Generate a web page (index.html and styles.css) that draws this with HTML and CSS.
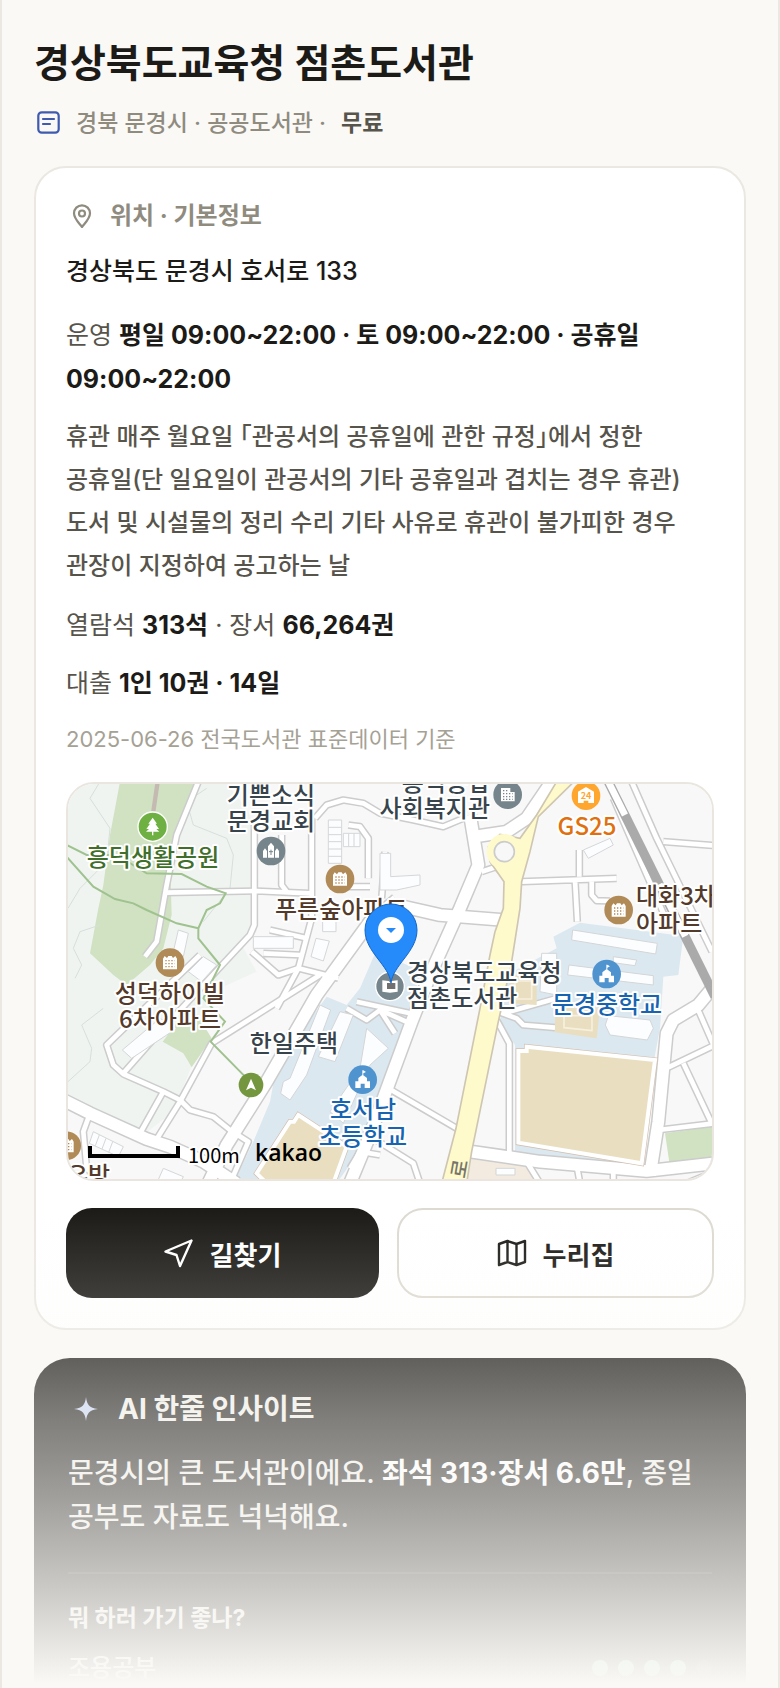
FILE: index.html
```html
<!DOCTYPE html>
<html lang="ko">
<head>
  <meta charset="UTF-8" />
  <meta name="viewport" content="width=device-width, initial-scale=1.0"/>
  <title>경상북도교육청 점촌도서관</title>
  <link rel="stylesheet" href="styles.css">
</head>
<body>

<main class="page">
  <header class="page-header">
    <h1>경상북도교육청 점촌도서관</h1>
    <p class="meta">
      <svg class="icon-book" viewBox="0 0 24 24" aria-hidden="true">
        <rect x="1.3" y="1.3" width="20.4" height="20.4" rx="3.4"/>
        <path d="M6 8h11M6 13h7"/>
      </svg>
      <span>경북 문경시 · 공공도서관 ·</span>
      <strong>무료</strong>
    </p>
  </header>

  <!-- Location + basic info -->
  <section class="card">
    <h2 class="card-title">
      <svg class="icon-pin" viewBox="0 0 24 24" aria-hidden="true">
        <path d="M12 23C8.500 18.500 4 14.500 4 9.300a8 8 0 0 1 16 0C20 14.500 15.500 18.500 12 23z"/>
        <circle cx="12" cy="9.500" r="3"/>
      </svg>
      위치 · 기본정보
    </h2>
    <p class="address">경상북도 문경시 호서로 133</p>
    <p class="row">운영 <b>평일 09:00~22:00 · 토 09:00~22:00 · 공휴일 09:00~22:00</b></p>
    <p class="closed">휴관 매주 월요일 「관공서의 공휴일에 관한 규정」에서 정한 공휴일(단 일요일이 관공서의 기타 공휴일과 겹치는 경우 휴관) 도서 및 시설물의 정리 수리 기타 사유로 휴관이 불가피한 경우 관장이 지정하여 공고하는 날</p>
    <p class="row">열람석 <b>313석</b> · 장서 <b>66,264권</b></p>
    <p class="row">대출 <b>1인 10권 · 14일</b></p>
    <p class="source">2025-06-26 전국도서관 표준데이터 기준</p>

    <div class="map">
      <svg viewBox="8 9 644 395" preserveAspectRatio="xMidYMid slice" role="img" aria-label="지도">
        <defs>
          <g id="roads-wide">
            <path d="M1010 375L930 440L770 660L620 920L500 1110L445 1225"/>
            <path d="M1230 120L1255 270L1200 400L1110 600L1055 740L985 930L930 1080L870 1225"/>
            <path d="M10 975L90 1015L260 1092L330 1115L430 1160L530 1225"/>
            <path d="M1965 630L1915 690L1840 735L1820 775L1795 1040L1770 1200"/>
            <path d="M1235 1130L1440 1160L1760 1188L1965 1165"/>
            <path d="M1030 395L1140 420L1330 435"/>
            <path d="M1475 20L1400 130L1340 170L1240 185"/>
          </g>
          <g id="roads-thin">
            <path d="M415 20L350 180L320 330L290 500L255 545"/>
            <path d="M315 353L590 348L750 355"/>
            <path d="M583 150V450L570 480L300 770L190 895"/>
            <path d="M755 130V430L715 580L650 700"/>
            <path d="M665 180V330L680 350"/>
            <path d="M765 130L800 90L850 75L910 85L960 115L1060 135L1150 155L1210 130"/>
            <path d="M575 530L655 600L715 580L835 610M610 535L720 540M630 465L740 490"/>
            <path d="M420 540L140 810L160 870L190 897L310 950L360 975L390 1005L460 1025L510 1065L565 1100L510 1225"/>
            <path d="M780 600L455 805L360 980L285 1100"/>
            <path d="M310 950L240 1075M88 1020L70 1070L80 1180L130 1225"/>
            <path d="M865 150L900 155L925 190V310M815 300L840 335H930M975 230L965 370"/>
            <path d="M1385 320L1670 310M1558 225V305M1545 315L1552 440M1595 320V360L1610 377L1650 378"/>
            <path d="M1265 290L1310 275L1340 310M1250 195L1255 250"/>
            <path d="M1715 20L1790 190L1956 530M1660 70L1830 460M1810 200L1965 212"/>
            <path d="M1908 690L1965 820M1825 877L1965 810M1870 865L1955 1045M1795 1065L1965 1045"/>
            <path d="M1348 1132V805L1310 735M985 940L1190 1060M1400 1160L1440 1225M1550 1170L1560 1225M1660 1180V1225M1880 1225L1965 1190"/>
            <path d="M1320 712L1370 730L1390 750L1485 758M1330 715L1490 670"/>
            <path d="M860 700L920 735L960 705L1050 745M890 680L1050 715M960 705L1005 775"/>
            <path d="M940 1090L1060 1165L1080 1225M870 1180L900 1130L960 1140"/>
          </g>
          <g id="apt">
            <circle r="43" fill="#b08a57"/>
            <path fill="#fff" d="M-21 20V-12L-16-20L-9-14L-5-20H5L9-14L16-20L21-12V20z"/>
            <path class="windows" d="M-14-6H14M-14 3H14M-14 12H14"/>
          </g>
          <g id="school">
            <circle r="43" fill="#4f93cf"/>
            <path fill="#fff" d="M-22 25V5H-13V-5L0-15L13-5V5H22V25H6V12H-6V25zM-1-12V-28H2L10-23L2-19V-12z"/>
          </g>
        </defs>

        <g transform="scale(.33333)">
          <rect width="1980" height="1240" fill="#f8f8f8"/>
          <path fill="#eff4f1" d="M0 0H480L560 100L590 170V470L540 500L590 590L480 640L400 860L340 1010L250 1080L0 960z"/>
          <path fill="#d0e2c2" d="M180 20H405L330 250L335 420L310 520L270 570L200 630L160 600L90 535L115 400L130 330L150 180zM345 750L400 700L455 790L395 877L370 835L308 800z"/>
          <path class="contour" d="M120 20L90 70L150 160L140 260L60 340L24 400M440 40L380 80L400 150L500 190L520 240L510 340L430 440M120 450L60 470L40 520L65 570L45 610M24 920L90 860L95 820L65 750L130 700"/>
          <path fill="none" stroke="#c5bab2" stroke-width="13" d="M293 20L280 110"/>
          <path fill="#dbe8f0" d="M800 665L860 690L900 640L960 500L1020 560L1085 590L960 960L890 1140L830 1225H520L580 1100L630 980L650 870z"/>
          <path fill="#dbe8f0" d="M1480 485L1560 443L1870 483L1855 600L1810 605L1800 760L1785 840L1745 1175L1365 1135V810L1320 740L1340 600L1490 520z"/>
          <path fill="#d0e2c2" d="M1815 1075L1965 1053V1158L1830 1175z"/>
          <path fill="#f3ebe0" d="M1235 1150L1410 1172L1420 1225H1220z"/>

          <g class="casing wide"><use href="#roads-wide"/></g>
          <g class="casing thin"><use href="#roads-thin"/></g>
          <g class="surface wide"><use href="#roads-wide"/></g>
          <g class="surface thin"><use href="#roads-thin"/></g>

          <!-- buildings -->
          <g class="building">
            <path d="M805 135h40v130h-40zM805 157h40M805 179h40M805 200h40M805 222h40M805 244h40M850 175h50v40h-50zM866 175v40M882 175v40M788 430h40v40h-40z"/>
            <path d="M355 465L385 475L370 545L340 530zM580 485H700V520H580zM768 490L808 498L790 558L753 545zM430 545L470 570L425 620L385 590zM960 235H992V305L1080 300V330L1010 345H960z"/>
            <path d="M300 730L350 760L215 850L187 825zM780 690L812 705L740 900L690 975L662 955L670 920L690 910zM840 710L880 720L825 860L775 845zM920 760L985 820L930 870L850 1045L810 1010L900 880z"/>
            <path d="M1570 225L1650 190L1660 210L1585 250zM1538 465L1792 505L1787 537L1535 495zM1527 570L1780 602V630L1523 600zM1660 545L1730 555L1725 572L1660 563zM1445 535H1490V660L1440 650z"/>
            <path d="M1645 722L1770 735L1780 760L1762 795L1650 780L1636 750zM1308 1180H1365V1200H1308z"/>
            <path d="M100 1070L190 1115L175 1145L88 1105zM118 1080L106 1112M138 1090L126 1122M158 1100L146 1132M310 1180L370 1205L360 1225H290z"/>
          </g>

          <!-- sports fields -->
          <g fill="#e9dec0">
            <path class="field-line" d="M1375 828H1400V815L1785 855L1745 1165L1375 1103z"/>
            <path class="field" d="M1375 828H1400V815L1785 855L1745 1165L1375 1103z"/>
            <path class="field-line" d="M715 1020L860 1115L820 1225H620L590 1195L690 1040H702z"/>
            <path class="field" d="M715 1020L860 1115L820 1225H620L590 1195L690 1040H702z"/>
            <path d="M1485 700H1620L1610 790L1485 772zM1350 600H1430V690L1345 685z"/>
            <path fill="none" stroke="#f6f0df" stroke-width="5" d="M1512 722H1596V767L1512 758zM1365 618H1415V672H1365z"/>
          </g>

          <!-- main road and roundabout -->
          <path fill="#fefacb" stroke="#cfc6b2" stroke-width="5" d="M1490 20H1542L1435 125L1410 230L1385 320L1380 400L1355 560L1315 740L1235 1130L1220 1225H1145L1188 1060L1260 700L1290 540L1305 470L1330 400L1332 320L1290 260L1285 215L1320 178L1380 190L1430 120z"/>
          <circle cx="1333" cy="230" r="53" fill="#fefacb"/>
          <circle cx="1333" cy="230" r="30" fill="#f8f8f8" stroke="#ccc" stroke-width="5"/>

          <!-- railway -->
          <path fill="none" stroke="#aaa" stroke-width="28" d="M1640 10L1965 665"/>
          <path fill="none" stroke="#fff" stroke-width="20" d="M1645 20L1695 120M1798 328L1876 484"/>

          <!-- walking trails -->
          <path class="trail" d="M20 210L80 240H170L260 295L365 297L440 335L497 355L480 385L440 405L415 460V490L480 570L430 670L495 740L452 800L570 920M20 245L100 335L165 372L220 385L260 405L350 445L415 460"/>

          <!-- place markers -->
          <g stroke="none">
            <g transform="translate(278 155)">
              <circle class="ring" r="44" fill="#6fb043"/>
              <path fill="#fff" d="M0-27L13-9H8L19 7H11L20 15H2V26H-2V15H-20L-11 7H-19L-8-9H-13z"/>
            </g>
            <g transform="translate(633 228)">
              <circle r="43" fill="#76858c"/>
              <path fill="#fff" d="M-24 20V0L-18-8L-12 0V20zM24 20V0L18-8L12 0V20zM-9 20V-14L0-25L9-14V20z"/>
              <path stroke="#76858c" stroke-width="3" d="M0-4V12M-6 2H6"/>
            </g>
            <use href="#apt" x="840" y="312"/>
            <use href="#apt" x="330" y="563"/>
            <use href="#apt" x="1676" y="405"/>
            <use href="#apt" x="20" y="1112"/>
            <use href="#school" x="1640" y="597"/>
            <use href="#school" x="908" y="914"/>
            <g transform="translate(1343 59)">
              <circle r="43" fill="#76858c"/>
              <path fill="#fff" d="M-20 20V-20H8V-8H21V20z"/>
              <path class="windows gray" d="M-14-12H4M-14-3H15M-14 6H15M-14 14H15"/>
            </g>
            <g transform="translate(1578 62)">
              <circle r="43" fill="#ffa62f"/>
              <path fill="#fff" d="M-24 22V-12L0-26L24-12V22H7V15H-7V22z"/>
            </g>
            <g transform="translate(990 634)">
              <circle class="ring" r="43" fill="#76858c"/>
              <path fill="#fff" d="M-23-18L-4-16L0-12L4-16L23-18V16L0 19L-23 16z"/>
              <path fill="#333" opacity=".7" d="M-9-10H16V8H-9z"/>
            </g>
            <g transform="translate(573 930)">
              <circle r="37" fill="#73963f"/>
              <path fill="#fff" d="M0-19L15 16L0 8L-15 16z"/>
            </g>
          </g>
        </g>

        <g class="labels">
          <text class="green" x="93" y="91" text-anchor="middle">흥덕생활공원</text>
          <text x="211" y="29" text-anchor="middle">기쁜소식</text>
          <text x="211" y="55" text-anchor="middle">문경교회</text>
          <text class="brown" x="215" y="143">푸른숲아파트</text>
          <text x="430" y="16" text-anchor="end">흥덕종합</text>
          <text x="430" y="42" text-anchor="end">사회복지관</text>
          <text class="orange" x="527" y="60" text-anchor="middle">GS25</text>
          <text class="brown" x="576" y="130">대화3차</text>
          <text class="brown" x="576" y="157">아파트</text>
          <text x="347" y="206">경상북도교육청</text>
          <text x="347" y="232">점촌도서관</text>
          <text class="blue" x="547" y="238" text-anchor="middle">문경중학교</text>
          <text class="brown" x="110" y="227" text-anchor="middle">성덕하이빌</text>
          <text class="brown" x="110" y="253" text-anchor="middle">6차아파트</text>
          <text x="234" y="277" text-anchor="middle">한일주택</text>
          <text class="blue" x="303" y="343" text-anchor="middle">호서남</text>
          <text class="blue" x="303" y="370" text-anchor="middle">초등학교</text>
          <text class="brown" x="6" y="409">우방</text>
          <text class="road" transform="translate(405 404) rotate(-80)">로</text>
          <text class="store" x="526" y="24" text-anchor="middle">24</text>
          <text class="scale" x="128" y="388">100m</text>
          <text class="brand" x="195" y="386">kakao</text>
        </g>
        <path fill="none" stroke="#000" stroke-width="4" d="M30 371V381H118V371"/>

        <!-- selected library -->
        <path fill="#258bfb" stroke="#1566c9" d="M331 208C329 190 305 177 305 155A26 26 0 0 1 357 155C357 177 333 190 331 208z"/>
        <circle cx="331" cy="155" r="13" fill="#fff"/>
        <path fill="#258bfb" d="M326 153H336L331 158z"/>
      </svg>
    </div>

    <div class="actions">
      <button type="button" class="btn btn-dark">
        <svg viewBox="0 0 30 30" aria-hidden="true"><path d="M27.500 2.500L1.500 13.500L12.500 17L16 28z"/></svg>
        길찾기
      </button>
      <button type="button" class="btn btn-light">
        <svg viewBox="0 0 30 30" aria-hidden="true"><path d="M2 6L10.500 3L19.500 6L28 3V24L19.500 27L10.500 24L2 27zM10.500 3V24M19.500 6V27"/></svg>
        누리집
      </button>
    </div>
  </section>

  <!-- AI insight -->
  <section class="insight">
    <h2 class="insight-title">
      <svg viewBox="0 0 24 24" aria-hidden="true"><path d="M12 0C13 7.500 15 11 24 12C15 13 13 16.500 12 24C11 16.500 9 13 0 12C9 11 11 7.500 12 0z"/></svg>
      AI 한줄 인사이트
    </h2>
    <p class="insight-text">문경시의 큰 도서관이에요. <b>좌석 313·장서 6.6만</b>, 종일 공부도 자료도 넉넉해요.</p>
    <h3>뭐 하러 가기 좋나?</h3>
    <div class="score">
      <span>조용공부</span>
      <span class="dots"><i></i><i></i><i></i><i></i><i class="off"></i></span>
    </div>
  </section>

  <div class="fade"></div>
</main>

</body>
</html>
```
FILE: styles.css
```css
/* Base styles */
* {
  box-sizing: border-box;
}

body {
  margin: 0;
  font-family: Inter, 'Noto Sans CJK KR', sans-serif;
  font-weight: 500;
  background: #faf9f6;
  color: #1c1b18;
  word-break: keep-all;
}

h1, h2, h3, p {
  margin: 0;
}

b, strong {
  font-weight: 700;
}

.page {
  position: relative;
  height: 100vh;
  overflow: hidden;
  padding: 37px 32px 0;
  border: solid #eae8e1;
  border-width: 0 2px;
}

/* Header */
h1 {
  font-size: 39px;
  line-height: 52px;
  font-weight: 700;
}

.meta {
  display: flex;
  align-items: center;
  gap: 15px;
  margin: 16px 0 25px;
  padding-left: 3px;
  font-size: 23px;
  line-height: 36px;
  color: #8f8b7f;
}

.meta strong {
  color: #57544c;
}

svg {
  display: block;
}

.icon-book,
.icon-pin {
  width: 24px;
  height: 24px;
  fill: none;
  stroke: #3f5bb0;
  stroke-width: 2.2px;
  stroke-linecap: round;
}

.icon-pin {
  stroke: #8f8b7f;
}

/* Info card */
.card {
  padding: 28px 30px 30px;
  background: #fff;
  border: 2px solid #eae8e1;
  border-radius: 32px;
}

.card-title {
  display: flex;
  align-items: center;
  gap: 16px;
  padding-left: 4px;
  font-size: 24px;
  line-height: 40px;
  color: #8f8b7f;
}

.address {
  margin: 15px 0 22px;
  font-size: 25px;
  line-height: 40px;
}

.row {
  margin-bottom: 14px;
  font-size: 25px;
  line-height: 44px;
  font-weight: 400;
  color: #57544c;
}

.row b {
  color: #1c1b18;
}

.closed {
  margin-bottom: 16px;
  font-size: 24px;
  line-height: 43px;
  font-feature-settings: "halt";
  color: #57544c;
}

.source {
  margin: 16px 0 25px;
  font-size: 22px;
  line-height: 36px;
  font-weight: 400;
  color: #a5a195;
}

/* Map */
.map {
  overflow: hidden;
  border: 2px solid #eae6df;
  border-radius: 28px;
}

.map svg {
  width: 100%;
  height: 395px;
}

.wide,
.thin {
  fill: none;
  stroke: #ccc;
  stroke-linejoin: round;
}

.casing.wide {
  stroke-width: 44px;
}

.casing.thin {
  stroke-width: 23px;
}

.surface {
  stroke: #fff;
}

.surface.wide {
  stroke-width: 35px;
}

.surface.thin {
  stroke-width: 14px;
}

.contour {
  fill: none;
  stroke: #d7dfda;
  stroke-width: 3px;
}

.building {
  fill: #fcfdfe;
  stroke: #d4d6d8;
  stroke-width: 3px;
}

.field-line {
  stroke: #d3bfae;
  stroke-width: 16px;
}

.field {
  stroke: #fff;
  stroke-width: 12px;
}

.trail {
  fill: none;
  stroke: #9fc28f;
  stroke-width: 6px;
}

.windows {
  fill: none;
  stroke: #b08a57;
  stroke-width: 4px;
  stroke-dasharray: 4 5;
}

.windows.gray {
  stroke: #76858c;
}

.ring {
  stroke: #fff;
  stroke-width: 4px;
}

.labels text {
  font-size: 24px;
  font-family: 'Noto Sans CJK KR', sans-serif;
  font-weight: 500;
  fill: #37444c;
  stroke: #fff;
  stroke-width: 4px;
  stroke-linejoin: round;
  paint-order: stroke;
}

.labels .green {
  fill: #3f6f2a;
}

.labels .brown {
  fill: #543a2a;
}

.labels .orange {
  fill: #e0700f;
}

.labels .blue {
  fill: #1764b0;
}

.labels .road {
  font-size: 20px;
  fill: #77756a;
  stroke: none;
}

.labels .store {
  font-size: 9px;
  font-weight: 700;
  fill: #ffa62f;
  stroke: none;
}

.labels .scale {
  font-size: 20px;
  font-weight: 400;
  fill: #000;
}

.labels .brand {
  font-family: 'Open Sans', sans-serif;
  font-size: 23px;
  font-weight: 600;
  fill: #000;
  stroke: none;
}

/* Buttons */
.actions {
  display: flex;
  gap: 18px;
  margin-top: 27px;
}

.btn {
  display: flex;
  flex: 1;
  align-items: center;
  justify-content: center;
  gap: 16px;
  height: 90px;
  border: none;
  border-radius: 26px;
  font-family: inherit;
  font-size: 26px;
  font-weight: 700;
  cursor: pointer;
}

.btn svg {
  width: 30px;
  height: 30px;
  fill: none;
  stroke: currentColor;
  stroke-width: 2.4px;
  stroke-linejoin: round;
}

.btn-dark {
  background: #1c1b18;
  color: #fff;
}

.btn-light {
  background: #fff;
  border: 2px solid #dddad1;
  color: #1c1b18;
}

/* AI insight */
.insight {
  height: 400px;
  margin-top: 28px;
  padding: 29px 34px;
  background: #1c1b18;
  border-radius: 36px;
  color: #f0eee8;
}

.insight-title {
  display: flex;
  align-items: center;
  gap: 20px;
  padding-left: 6px;
  font-size: 28px;
  line-height: 44px;
}

.insight-title svg {
  width: 24px;
  height: 24px;
  fill: #c6d3f2;
}

.insight-text {
  margin-top: 20px;
  padding-bottom: 33px;
  border-bottom: 2px solid #33322e;
  font-size: 28px;
  line-height: 44px;
}

.insight-text b {
  color: #fff;
}

.insight h3 {
  margin-top: 24px;
  font-size: 23px;
  line-height: 40px;
}

.score {
  display: flex;
  align-items: center;
  justify-content: space-between;
  margin-top: 10px;
  font-size: 24px;
  line-height: 40px;
}

.dots {
  display: flex;
  gap: 10px;
}

.dots i {
  width: 16px;
  height: 16px;
  border-radius: 50%;
  background: #7fd6a8;
}

.dots .off {
  background: #3a3935;
}

/* Fade at the bottom of the screen */
.fade {
  position: absolute;
  left: -2px;
  right: -2px;
  bottom: 0;
  height: 480px;
  pointer-events: none;
  background: linear-gradient(
    rgba(250, 249, 246, 0) 0,
    rgba(250, 249, 246, 0.16) 90px,
    rgba(250, 249, 246, 0.31) 150px,
    rgba(250, 249, 246, 0.45) 212px,
    rgba(250, 249, 246, 0.6) 292px,
    rgba(250, 249, 246, 0.77) 372px,
    rgba(250, 249, 246, 0.94) 450px,
    rgba(250, 249, 246, 1) 476px
  );
}
```
